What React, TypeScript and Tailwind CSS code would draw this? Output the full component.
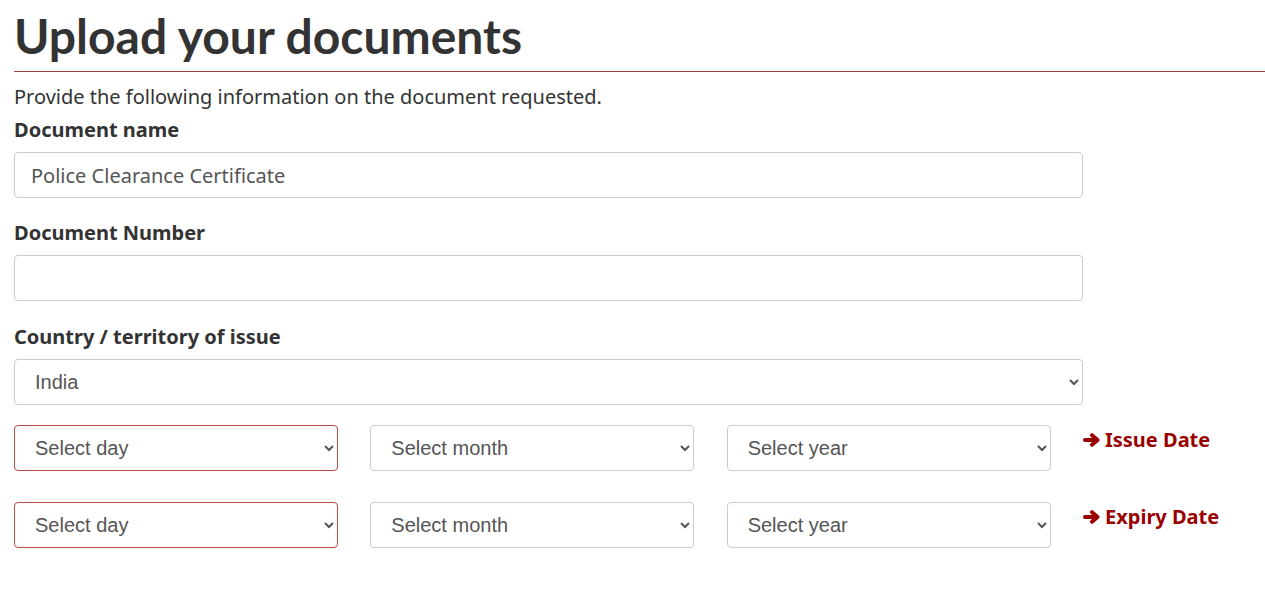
const days = ['Select day'];
const months = ['Select month'];
const years = ['Select year'];

const BoldArrow = () => (
    <svg width="17" height="14" viewBox="0 0 17 14" fill="none" stroke="currentColor" strokeWidth="4" strokeLinecap="round" strokeLinejoin="round">
        <line x1="2" y1="7" x2="13" y2="7" />
        <polyline points="9,2.2 14.5,7 9,11.8" />
    </svg>
);

const DateRow = ({ label }: { label: string }) => (
    <div className="flex items-start">
        <div className="grid grid-cols-3 w-[1069px]">
            <select className="w-[324px] h-[46px] pl-[16px] pr-[8px] border border-[#b94a48] rounded-[4px] bg-white text-[20px] text-[#555] font-['Liberation_Sans',Arial,sans-serif]">
                {days.map(d => <option key={d}>{d}</option>)}
            </select>
            <select className="w-[324px] h-[46px] pl-[16px] pr-[8px] border border-[#ccc] rounded-[4px] bg-white text-[20px] text-[#555] font-['Liberation_Sans',Arial,sans-serif]">
                {months.map(m => <option key={m}>{m}</option>)}
            </select>
            <select className="w-[324px] h-[46px] pl-[16px] pr-[8px] border border-[#ccc] rounded-[4px] bg-white text-[20px] text-[#555] font-['Liberation_Sans',Arial,sans-serif]">
                {years.map(y => <option key={y}>{y}</option>)}
            </select>
        </div>
        <div className="flex items-center gap-[5px] pt-[1px] text-[20px] leading-[27px] font-bold text-[#990000]">
            <BoldArrow />
            <span>{label}</span>
        </div>
    </div>
);

export default function App() {
    return (
        <div className="bg-white min-h-[590px] pl-[14px] font-['Noto_Sans',sans-serif] text-[#333]">
            {/* Title */}
            <h1 className="font-['Lato',sans-serif] font-bold text-[48px] leading-[55px] pt-[8px] pb-[8px] text-[#333] border-b border-[#9e4040]">
                Upload your documents
            </h1>

            <p className="text-[20px] leading-[27px] mt-[11px]">
                Provide the following information on the document requested.
            </p>

            {/* Document name */}
            <label className="block text-[20px] leading-[27px] font-bold mt-[6px] mb-[9px]">Document name</label>
            <input
                className="block w-[1069px] h-[46px] px-[16px] border border-[#ccc] rounded-[4px] text-[20px] text-[#555] outline-none"
                defaultValue="Police Clearance Certificate"
            />

            {/* Document number */}
            <label className="block text-[20px] leading-[27px] font-bold mt-[21px] mb-[9px]">Document Number</label>
            <input className="block w-[1069px] h-[46px] px-[16px] border border-[#ccc] rounded-[4px] text-[20px] text-[#555] outline-none" />

            {/* Country */}
            <label className="block text-[20px] leading-[27px] font-bold mt-[22px] mb-[9px]">Country / territory of issue</label>
            <select className="block w-[1069px] h-[46px] pl-[16px] pr-[8px] border border-[#ccc] rounded-[4px] bg-white text-[20px] text-[#555] font-['Liberation_Sans',Arial,sans-serif]">
                <option>India</option>
            </select>

            {/* Dates */}
            <div className="mt-[20px] flex flex-col gap-[31px]">
                <DateRow label="Issue Date" />
                <DateRow label="Expiry Date" />
            </div>
        </div>
    );
}
